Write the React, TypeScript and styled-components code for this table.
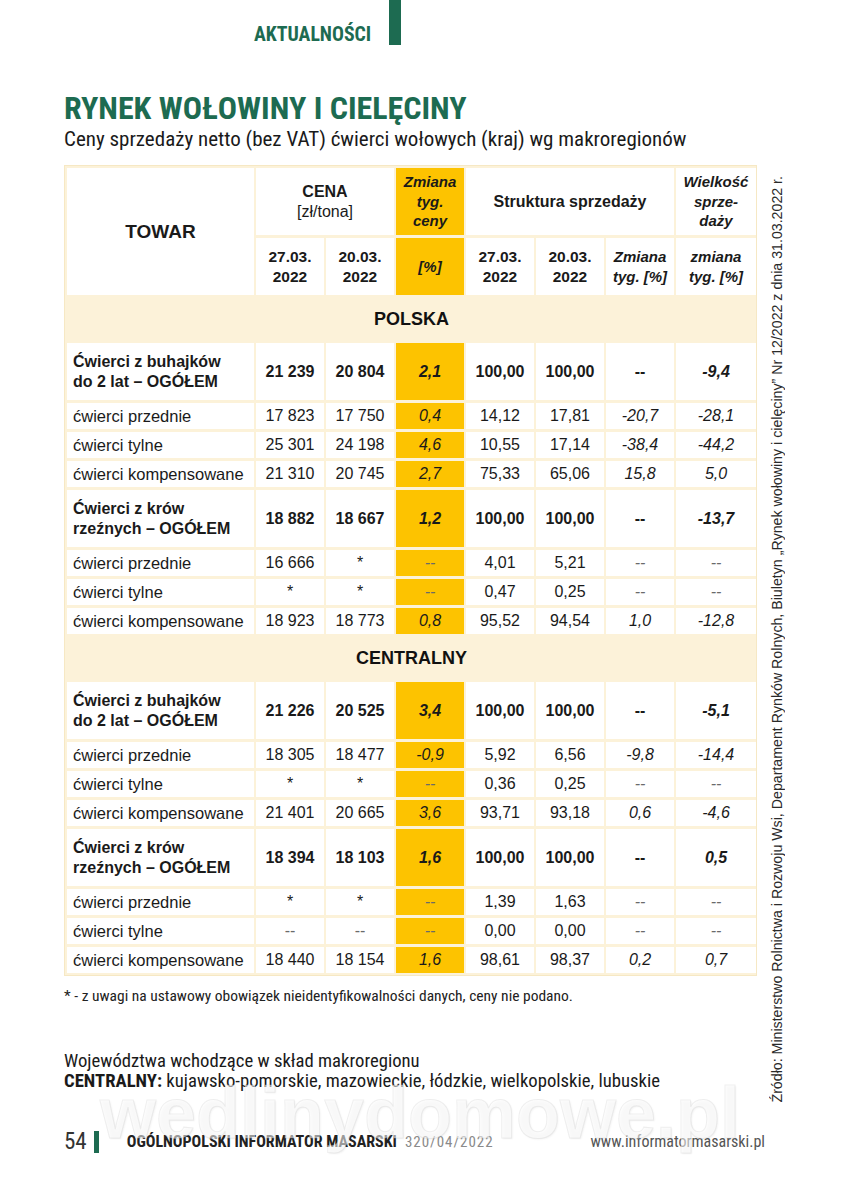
import React from "react";
import styled, { createGlobalStyle } from "styled-components";

const GlobalStyle = createGlobalStyle`
  html, body { margin: 0; padding: 0; background: #ffffff; }
  body { font-family: "Liberation Sans", Arial, sans-serif; color: #1a1a1a; }
  * { box-sizing: border-box; }
`;

const NARROW = `"Liberation Sans Narrow", "Roboto Condensed", "DejaVu Sans Condensed", "Liberation Sans", sans-serif`;
const GREEN = "#1d6b51";
const YELLOW = "#fdc300";
const CREAM = "#fcf2d9";

const Page = styled.div`
  position: relative;
  width: 843px;
  height: 1200px;
  overflow: hidden;
  background: #fff;
`;

const TopBar = styled.header`
  display: flex;
  align-items: flex-end;
  gap: 18px;
  padding-left: 254px;
  height: 45px;
`;

const Section = styled.div`
  font-family: ${NARROW};
  font-stretch: condensed;
  font-weight: 700;
  font-size: 19.8px;
  line-height: 1;
  color: ${GREEN};
`;

const TopMark = styled.div`
  width: 12px;
  align-self: stretch;
  background: ${GREEN};
`;

const Content = styled.main`
  padding-left: 64px;
`;

const Title = styled.h1`
  margin: 46px 0 0;
  font-family: ${NARROW};
  font-stretch: condensed;
  font-weight: 700;
  font-size: 32px;
  line-height: 34px;
  color: ${GREEN};
`;

const Subtitle = styled.p`
  margin: 2px 0 0;
  font-family: ${NARROW};
  font-stretch: condensed;
  font-size: 21px;
  line-height: 24px;
  color: #1a1a1a;
`;

const Body = styled.div`
  display: flex;
  align-items: flex-start;
  margin-top: 14px;
`;

const MainCol = styled.div`
  width: 693px;
`;

const Aside = styled.aside`
  margin-top: 11px;
  margin-left: 12px;
  writing-mode: vertical-rl;
  transform: rotate(180deg);
  white-space: nowrap;
  font-family: "Liberation Sans", Arial, sans-serif;
  font-size: 14.2px;
  line-height: 16px;
  color: #2a2a2a;
`;

const Table = styled.div`
  display: grid;
  grid-template-columns: 187px 68px 68px 68px 68px 68px 68px 80px;
  gap: 3px 2px;
  padding: 2px;
  background: ${CREAM};
  border: 1px solid #f6e8c4;
`;

type Kind = "h1" | "h2" | "bold" | "row";

const heights: Record<Kind, number> = { h1: 67, h2: 57, bold: 57, row: 26 };

const Cell = styled.div<{
  $kind: Kind;
  $yellow?: boolean;
  $bold?: boolean;
  $italic?: boolean;
  $left?: boolean;
  $muted?: boolean;
  $span?: number;
  $rows?: number;
  $size?: number;
}>`
  display: flex;
  flex-direction: column;
  justify-content: center;
  align-items: ${(p) => (p.$left ? "flex-start" : "center")};
  text-align: ${(p) => (p.$left ? "left" : "center")};
  padding: ${(p) => (p.$left ? "0 6px" : "0 2px")};
  min-height: ${(p) => heights[p.$kind]}px;
  grid-column: span ${(p) => p.$span ?? 1};
  grid-row: span ${(p) => p.$rows ?? 1};
  background: ${(p) => (p.$yellow ? YELLOW : "#ffffff")};
  font-family: "Liberation Sans", Arial, sans-serif;
  font-size: ${(p) => p.$size ?? 16}px;
  line-height: ${(p) => (p.$kind === "row" ? "18px" : "19.5px")};
  font-weight: ${(p) => (p.$bold ? 700 : 400)};
  font-style: ${(p) => (p.$italic ? "italic" : "normal")};
  color: ${(p) => (p.$muted ? "#6a6a6a" : "#1a1a1a")};
  white-space: pre-line;
`;

const Unit = styled.span`
  font-weight: 400;
  font-size: 16px;
`;

const RegionCell = styled.div`
  grid-column: 1 / -1;
  height: 42px;
  display: flex;
  align-items: center;
  justify-content: center;
  font-family: "Liberation Sans", Arial, sans-serif;
  font-weight: 700;
  font-size: 18px;
  color: #111;
`;

const Note = styled.p`
  margin: 11px 0 0;
  font-family: ${NARROW};
  font-stretch: condensed;
  font-size: 15.5px;
  line-height: 18px;
  color: #222;
`;

const Regions = styled.p`
  margin: 46px 0 0;
  font-family: ${NARROW};
  font-stretch: condensed;
  font-size: 18.7px;
  line-height: 20px;
  color: #1a1a1a;
`;

const Strong = styled.strong`
  font-weight: 700;
`;

const Footer = styled.footer`
  display: flex;
  align-items: center;
  margin-top: 27px;
  padding-left: 64px;
  height: 24px;
  font-family: ${NARROW};
  font-stretch: condensed;
`;

const PageNo = styled.span`
  font-size: 23px;
  color: #333;
`;

const FootMark = styled.span`
  width: 5px;
  height: 22px;
  margin-left: 7px;
  background: ${GREEN};
`;

const Mag = styled.span`
  margin-left: 28px;
  font-weight: 700;
  font-size: 16px;
  color: #222;
`;

const Issue = styled.span`
  margin-left: 8px;
  font-size: 15px;
  color: #8a8a8a;
  letter-spacing: 1px;
`;

const Url = styled.span`
  margin-left: auto;
  margin-right: 78px;
  font-size: 16px;
  color: #555;
`;

const Watermark = styled.div`
  position: absolute;
  left: 100px;
  top: 1077px;
  font-family: "Liberation Sans", Arial, sans-serif;
  font-weight: 700;
  font-size: 72px;
  line-height: 1;
  color: rgba(255, 255, 255, 0.55);
  -webkit-text-stroke: 1px rgba(200, 200, 200, 0.28);
  text-shadow: 1px 1px 2px rgba(0, 0, 0, 0.06);
  pointer-events: none;
`;

type Row = {
  label: string;
  bold?: boolean;
  v: string[];
};

const polska: Row[] = [
  { label: "Ćwierci z buhajków\ndo 2 lat – OGÓŁEM", bold: true, v: ["21 239", "20 804", "2,1", "100,00", "100,00", "--", "-9,4"] },
  { label: "ćwierci przednie", v: ["17 823", "17 750", "0,4", "14,12", "17,81", "-20,7", "-28,1"] },
  { label: "ćwierci tylne", v: ["25 301", "24 198", "4,6", "10,55", "17,14", "-38,4", "-44,2"] },
  { label: "ćwierci kompensowane", v: ["21 310", "20 745", "2,7", "75,33", "65,06", "15,8", "5,0"] },
  { label: "Ćwierci z krów\nrzeźnych – OGÓŁEM", bold: true, v: ["18 882", "18 667", "1,2", "100,00", "100,00", "--", "-13,7"] },
  { label: "ćwierci przednie", v: ["16 666", "*", "--", "4,01", "5,21", "--", "--"] },
  { label: "ćwierci tylne", v: ["*", "*", "--", "0,47", "0,25", "--", "--"] },
  { label: "ćwierci kompensowane", v: ["18 923", "18 773", "0,8", "95,52", "94,54", "1,0", "-12,8"] },
];

const centralny: Row[] = [
  { label: "Ćwierci z buhajków\ndo 2 lat – OGÓŁEM", bold: true, v: ["21 226", "20 525", "3,4", "100,00", "100,00", "--", "-5,1"] },
  { label: "ćwierci przednie", v: ["18 305", "18 477", "-0,9", "5,92", "6,56", "-9,8", "-14,4"] },
  { label: "ćwierci tylne", v: ["*", "*", "--", "0,36", "0,25", "--", "--"] },
  { label: "ćwierci kompensowane", v: ["21 401", "20 665", "3,6", "93,71", "93,18", "0,6", "-4,6"] },
  { label: "Ćwierci z krów\nrzeźnych – OGÓŁEM", bold: true, v: ["18 394", "18 103", "1,6", "100,00", "100,00", "--", "0,5"] },
  { label: "ćwierci przednie", v: ["*", "*", "--", "1,39", "1,63", "--", "--"] },
  { label: "ćwierci tylne", v: ["--", "--", "--", "0,00", "0,00", "--", "--"] },
  { label: "ćwierci kompensowane", v: ["18 440", "18 154", "1,6", "98,61", "98,37", "0,2", "0,7"] },
];

const italicCols = new Set([2, 5, 6]);

function DataRows({ rows, keyPrefix }: { rows: Row[]; keyPrefix: string }) {
  return (
    <>
      {rows.map((r, i) => {
        const kind: Kind = r.bold ? "bold" : "row";
        return (
          <React.Fragment key={`${keyPrefix}-${i}`}>
            <Cell $kind={kind} $left $bold={r.bold} $size={r.bold ? 16 : 16.5}>
              {r.label}
            </Cell>
            {r.v.map((val, j) => (
              <Cell
                key={j}
                $kind={kind}
                $yellow={j === 2}
                $bold={r.bold}
                $italic={italicCols.has(j) && !(r.bold && val === "--")}
                $muted={!r.bold && val === "--"}
              >
                {val.replace(/ /g, "\u00a0")}
              </Cell>
            ))}
          </React.Fragment>
        );
      })}
    </>
  );
}

export default function App() {
  return (
    <Page>
      <GlobalStyle />
      <TopBar>
        <Section>AKTUALNOŚCI</Section>
        <TopMark />
      </TopBar>
      <Content>
        <Title>RYNEK WOŁOWINY I CIELĘCINY</Title>
        <Subtitle>Ceny sprzedaży netto (bez VAT) ćwierci wołowych (kraj) wg makroregionów</Subtitle>
        <Body>
          <MainCol>
            <Table>
              <Cell $kind="h1" $rows={2} $bold $size={19}>
                TOWAR
              </Cell>
              <Cell $kind="h1" $span={2} $bold>
                <span>CENA</span>
                <Unit>[zł/tona]</Unit>
              </Cell>
              <Cell $kind="h1" $yellow $bold $italic $size={15}>
                {"Zmiana\ntyg.\nceny"}
              </Cell>
              <Cell $kind="h1" $span={3} $bold>
                Struktura sprzedaży
              </Cell>
              <Cell $kind="h1" $bold $italic $size={15}>
                {"Wielkość\nsprze-\ndaży"}
              </Cell>
              <Cell $kind="h2" $bold $size={15.5}>{"27.03.\n2022"}</Cell>
              <Cell $kind="h2" $bold $size={15.5}>{"20.03.\n2022"}</Cell>
              <Cell $kind="h2" $yellow $bold $italic $size={15}>[%]</Cell>
              <Cell $kind="h2" $bold $size={15.5}>{"27.03.\n2022"}</Cell>
              <Cell $kind="h2" $bold $size={15.5}>{"20.03.\n2022"}</Cell>
              <Cell $kind="h2" $bold $italic $size={15}>{"Zmiana\ntyg. [%]"}</Cell>
              <Cell $kind="h2" $bold $italic $size={15}>{"zmiana\ntyg. [%]"}</Cell>
              <RegionCell>POLSKA</RegionCell>
              <DataRows rows={polska} keyPrefix="pl" />
              <RegionCell>CENTRALNY</RegionCell>
              <DataRows rows={centralny} keyPrefix="ce" />
            </Table>
            <Note>
              * - z uwagi na ustawowy obowiązek nieidentyfikowalności danych, ceny nie podano.
            </Note>
            <Regions>
              Województwa wchodzące w skład makroregionu
              <br />
              <Strong>CENTRALNY:</Strong> kujawsko-pomorskie, mazowieckie, łódzkie, wielkopolskie, lubuskie
            </Regions>
          </MainCol>
          <Aside>
            Źródło: Ministerstwo Rolnictwa i Rozwoju Wsi, Departament Rynków Rolnych, Biuletyn „Rynek wołowiny i
            cielęciny” Nr 12/2022 z dnia 31.03.2022 r.
          </Aside>
        </Body>
      </Content>
      <Footer>
        <PageNo>54</PageNo>
        <FootMark />
        <Mag>OGÓLNOPOLSKI INFORMATOR MASARSKI</Mag>
        <Issue>320/04/2022</Issue>
        <Url>www.informatormasarski.pl</Url>
      </Footer>
      <Watermark aria-hidden="true">wedlinydomowe.pl</Watermark>
    </Page>
  );
}
